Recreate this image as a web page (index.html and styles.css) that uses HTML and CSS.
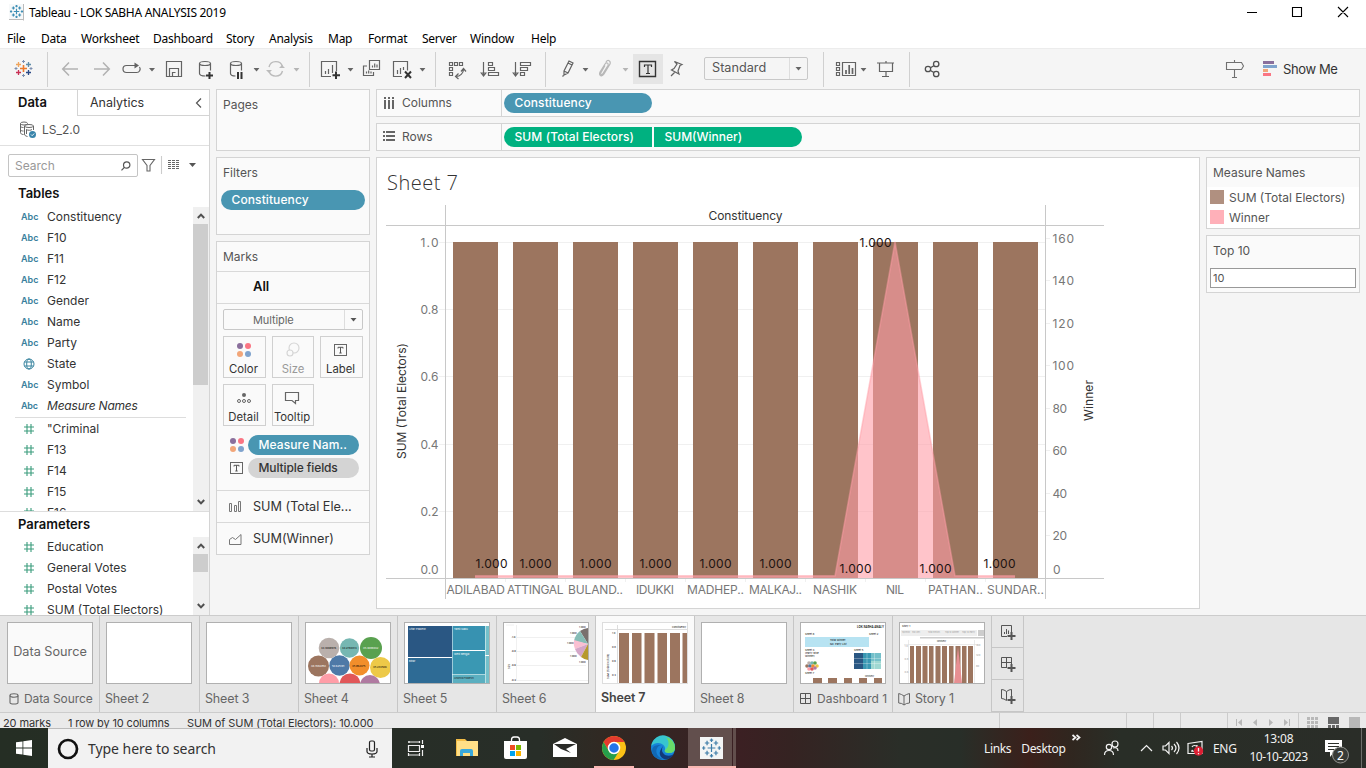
FILE: index.html
```html
<!DOCTYPE html>
<html lang="en">
<head>
<meta charset="utf-8">
<title>Tableau - LOK SABHA ANALYSIS 2019</title>
<link rel="stylesheet" href="styles.css">
</head>
<body>
<svg class="defs" width="0" height="0">
  <defs>
    <symbol id="caret" viewBox="0 0 6 4"><path d="M0 0h6L3 3.6z"/></symbol>
    <symbol id="hash" viewBox="0 0 12 12"><path d="M4 1v10M8 1v10M1 4h10M1 8h10" fill="none" stroke="#3a9c7c" stroke-width="1.1"/></symbol>
    <symbol id="tbox" viewBox="0 0 14 12"><rect x=".5" y=".5" width="12" height="11" fill="none" stroke="#666"/><path d="M4 4.5V3.3h5v1.2M6.5 3.3V9M5.3 9h2.4" fill="none" stroke="#555"/></symbol>
    <symbol id="dots" viewBox="0 0 16 16"><circle cx="4" cy="4" r="3" fill="#8a6f9c"/><circle cx="12" cy="4" r="3" fill="#fa7583"/><circle cx="4" cy="12" r="3" fill="#f2a679"/><circle cx="12" cy="12" r="3" fill="#7fa3cd"/></symbol>
    <symbol id="tlogo" viewBox="0 0 18 18"><path d="M9 5.5v7M5.5 9h7"/><path d="M5 2.5v4M3 4.5h4M13 2.500v4M11 4.500h4M5 11.500v4M3 13.500h4M13 11.500v4M11 13.500h4M9 .500v3M7.500 2h3M9 14.500v3M7.500 16h3M2 7.500v3M.500 9h3M16 7.500v3M14.500 9h3"/></symbol>
    <symbol id="up" viewBox="0 0 8 6"><path d="M.8 5L4 1.600 7.200 5" fill="none" stroke="#505050" stroke-width="2"/></symbol>
    <symbol id="down" viewBox="0 0 8 6"><path d="M.8 1L4 4.400 7.200 1" fill="none" stroke="#505050" stroke-width="2"/></symbol>
  </defs>
</svg>

<header class="titlebar">
  <svg class="app-icon" width="16" height="17" viewBox="0 0 16 17"><path d="M0 0h15v16H0z" fill="#f7f9fa"/><path d="M14.500 0v16.500M0 15.500h15" stroke="#bbb" fill="none"/><use href="#tlogo" x=".5" y=".5" width="14" height="14" fill="none" stroke="#3f8fb5" stroke-width="1.500"/></svg>
  <span class="title">Tableau - LOK SABHA ANALYSIS 2019</span>
  <svg class="window-controls" width="110" height="24" viewBox="1240 0 110 24"><path d="M1247 12.500h10M1292.500 7.500h9v9h-9zM1338 7l10 10M1348 7l-10 10" fill="none" stroke="#000" stroke-width="1.100"/></svg>
</header>
<nav class="menubar"><span class="m1">File</span><span class="m2">Data</span><span class="m3">Worksheet</span><span class="m4">Dashboard</span><span class="m5">Story</span><span class="m6">Analysis</span><span class="m7">Map</span><span class="m8">Format</span><span class="m9">Server</span><span class="m10">Window</span><span>Help</span></nav>

<div class="toolbar">
  <svg width="47" height="35" viewBox="0 52 47 35" fill="none" stroke-width="1.300">
    <path d="M23.500 65v7M20 68.500h7" stroke="#ee7a2c" stroke-width="1.600"/><path d="M18.500 62v5M16 64.500h5" stroke="#efa45c"/><path d="M28.500 62v5M26 64.500h5" stroke="#5d8ca8"/><path d="M18.500 70v5M16 72.500h5" stroke="#c93055"/><path d="M28.500 70v5M26 72.500h5" stroke="#2c4a86"/><path d="M23.500 60v3M22 61.500h3M23.500 74v3M22 75.500h3M31 67v3M29.500 68.500h3M16 67v3M14.500 68.500h3" stroke="#7d8fb0" stroke-width="1"/>
  </svg>
  <i class="sep"></i>
  <svg width="261" height="35" viewBox="48 52 261 35" fill="none" stroke="#636363" stroke-width="1.200">
    <path d="M78 69H63M69 62.500L62.700 69l6.300 6.500M94 69h15M103 62.500l6.300 6.500-6.300 6.500" stroke="#b2b2b2" stroke-width="1.500"/>
    <path d="M135 65.500h-8.500a3.500 3.500 0 0 0 0 7h10a3.500 3.500 0 0 0 3-5.500" /><path d="M134.500 62.500v6l4.500-3z" fill="#636363" stroke="none"/>
    <path d="M166.500 61.500h15v15h-15zM169.500 76.500v-8h9v8M172.500 76.500v-4h3"/>
    <ellipse cx="205" cy="63.500" rx="5.500" ry="2"/><path d="M199.500 63.500v10c0 2 3 2.500 6 2.500M210.500 63.500v7"/><path d="M209.500 72v7M206 75.500h7" stroke="#333" stroke-width="2"/>
    <ellipse cx="236" cy="63.500" rx="5.500" ry="2"/><path d="M230.500 63.500v10c0 2 3 2.500 5 2.500M241.500 63.500v7"/><path d="M238 72v7M241.500 72v7" stroke="#333" stroke-width="2"/>
    <path d="M269 67a7 7 0 0 1 13.500-.5M282.500 71a7 7 0 0 1-13.500 0" stroke="#bbb" stroke-width="1.400"/><path d="M279 68h6l-3-3zM266 70h6l-3 3z" fill="#bbb" stroke="none"/>
    <g fill="#666" stroke="none"><use href="#caret" x="149" y="68" width="6" height="4"/><use href="#caret" x="253.500" y="68" width="6" height="4"/><use href="#caret" x="293.500" y="68" width="6" height="4" fill="#b5b5b5"/></g>
  </svg>
  <i class="sep"></i>
  <svg width="125" height="35" viewBox="310 52 125 35" fill="none" stroke="#636363" stroke-width="1.200">
    <path d="M331 76.500h-9.500v-15h15V71M325.500 74v-3M328.500 74v-5M332.500 73v-8"/><path d="M336 71.500v7.500M332.500 75.300h7.500" stroke="#333" stroke-width="2"/>
    <path d="M369.500 60.500h10v9h-10zM372.500 67.500v-2M374.700 67.500v-4M377 67.500v-3M367 66h-3.500v9.500h10V72M366.500 73.500v-2M368.700 73.500v-3M371 73.500v-2"/>
    <path d="M402 76.500h-8.500v-15h14v9M397.500 74v-4M400.500 74v-6M403.500 70v-3"/><path d="M405 71.500l6 6.500M411 71.500l-6 6.500" stroke="#333" stroke-width="2"/>
    <g fill="#666" stroke="none"><use href="#caret" x="347.500" y="68" width="6" height="4"/><use href="#caret" x="419.500" y="68" width="6" height="4"/></g>
  </svg>
  <i class="sep"></i>
  <svg width="109" height="35" viewBox="436 52 109 35" fill="none" stroke="#636363" stroke-width="1.200">
    <path d="M449.500 62.500h3v3h-3zM454.500 62.500h3v3h-3zM459.500 62.500h3v3h-3zM449.500 67.500h3v3h-3zM449.500 72.500h3v3h-3zM456 76.500c4 0 7.500-3 7.500-7.500M461 71.500l2.500-3 2.500 3M458.500 73.500l-3 3 3 2.500"/>
    <path d="M483.500 62v13M481.200 73l2.300 3 2.300-3zM488.500 62.500h4v3h-4zM488.500 67.500h6v3h-6zM488.500 72.500h10v3h-10z"/>
    <path d="M515.500 62v13M513.200 73l2.300 3 2.300-3zM520.500 62.500h10v3h-10zM520.500 67.500h7v3h-7zM520.500 72.500h4v3h-4z"/>
  </svg>
  <i class="sep"></i>
  <svg width="158" height="35" viewBox="546 52 158 35" fill="none" stroke="#636363" stroke-width="1.200">
    <path d="M564 71l5-10 4 2-5 10-4 2zM564 71l4 2M568 63l4 2M562.500 76.500l1-1"/>
    <path d="M600 72l5-8c1-2 4-1 3 1.500l-5 8c-1 2-3 1-2-1l4-7M600 72c-1.500 4 2 5 4 2l6-10c1-3-2-5-4-2" stroke="#b8b8b8"/>
    <rect x="633" y="54" width="30" height="30" fill="#e5e5e5" stroke="none"/><path d="M639.500 61.500h16v15h-16z" stroke="#333" stroke-width="1.400"/><path d="M644.500 67v-2h7v2M648 65v8.500M646 73.500h4" stroke="#333"/>
    <path d="M674.500 61.500l7.500 3-2 1-2 5.500 1 3-7.500-4 2.500-1.500 3-4.500zM675 72l-4 4"/>
    <g fill="#666" stroke="none"><use href="#caret" x="582.500" y="68" width="6" height="4"/><use href="#caret" x="622.500" y="68" width="6" height="4" fill="#b5b5b5"/></g>
  </svg>
  <div class="fit-select"><span>Standard</span><b><svg width="7" height="4" fill="#666"><use href="#caret" width="7" height="4"/></svg></b></div>
  <i class="sep after-select"></i>
  <svg width="85" height="35" viewBox="824 52 85 35" fill="none" stroke="#636363" stroke-width="1.200">
    <path d="M836.500 62.500h3v3h-3zM836.500 67.500h3v3h-3zM836.500 72.500h3v3h-3zM842.500 62.500h13v13h-13z"/><path d="M846 74v-4M849.200 74v-9M852.500 74v-6" stroke-width="1.700"/>
    <path d="M877 63h17M879.500 63.500v8h13v-8M886 61v2M886 72v4.500M882 76.500h7" /><use href="#caret" x="860.500" y="68" width="6" height="4" fill="#666" stroke="none"/>
  </svg>
  <i class="sep"></i>
  <svg width="32" height="35" viewBox="910 52 32 35" fill="none" stroke="#505050" stroke-width="1.300"><circle cx="928" cy="69" r="2.700"/><circle cx="936.200" cy="64" r="2.700"/><circle cx="936.200" cy="74" r="2.700"/><path d="M930.500 67.700l3.300-2M930.500 70.500l3.300 2"/></svg>
  <div class="show-me">
    <svg width="56" height="35" viewBox="1224 52 56 35" fill="none" stroke="#707070" stroke-width="1.100"><path d="M1226.500 62.500h15l2 3.500-2 3.500h-15zM1234.500 60v2.500M1234.500 69.500v8M1232 77.500h5"/><g stroke="none"><path d="M1263 61h11v3h-11z" fill="#8a6f9c"/><path d="M1263 65h14v3h-14z" fill="#7fa3cd"/><path d="M1263 69h5v3h-5z" fill="#f2a679"/><path d="M1263 73h8v3h-8z" fill="#fa7583"/></g></svg>
    <span>Show Me</span>
  </div>
</div>

<main class="workspace">
  <aside class="data-pane">
    <div class="pane-tabs"><b>Data</b><span><em>Analytics</em><svg width="8" height="10" viewBox="0 0 8 10"><path d="M6 .5L1.500 5 6 9.500" fill="none" stroke="#555" stroke-width="1.200"/></svg></span></div>
    <div class="datasource"><svg width="17" height="17" viewBox="19 121 17 17" fill="none" stroke="#666"><ellipse cx="24" cy="123.500" rx="3.500" ry="1.500"/><path d="M20.500 123.500v9c0 1 1 2 3 2M20.500 126.500c1 1 2 1 3 1M20.500 130c1 1 2 1 3 1"/><ellipse cx="29" cy="126" rx="4.500" ry="1.500"/><path d="M24.500 126v8c0 1.500 1 2 3 2.500M33.500 126v4M26 129.500c2 1 5 1 6 0M26.500 130v4"/><circle cx="32.500" cy="134.500" r="3.500" fill="#3a85ab" stroke="none"/><path d="M31 134.500l1.200 1.200 2-2.200" stroke="#fff" stroke-width=".9"/></svg><span>LS_2.0</span></div>
    <div class="search-row">
      <div class="search"><span>Search</span><svg width="10" height="10" viewBox="0 0 10 10" fill="none" stroke="#555" stroke-width="1.200"><circle cx="5.700" cy="4" r="3.200"/><path d="M3.400 6.300L.5 9.300"/></svg></div>
      <svg width="68" height="22" viewBox="138 154 68 22" fill="none" stroke="#666" stroke-width="1.100"><path d="M142.500 159.500h12l-4.500 6v5.500h-3v-5.500z"/><path d="M161.500 156v18" stroke="#ccc"/><path d="M168 160.500h12M168 162.500h12M168 164.500h12M168 166.500h12M168 168.500h12" stroke-dasharray="3 1"/><path d="M189 163h7l-3.500 4z" fill="#555" stroke="none"/></svg>
    </div>
    <h3 class="tables">Tables</h3>
    <div class="field-area tall">
      <ul>
        <li><i>Abc</i>Constituency</li><li><i>Abc</i>F10</li><li><i>Abc</i>F11</li><li><i>Abc</i>F12</li><li><i>Abc</i>Gender</li><li><i>Abc</i>Name</li><li><i>Abc</i>Party</li>
        <li><i><svg width="12" height="12" viewBox="0 0 12 12" fill="none" stroke="#3a85a0"><circle cx="6" cy="6" r="5"/><ellipse cx="6" cy="6" rx="2.300" ry="5"/><path d="M1.500 4h9M1.500 8h9"/></svg></i>State</li>
        <li><i>Abc</i>Symbol</li><li class="italic"><i>Abc</i>Measure Names</li><li class="rule"></li>
        <li><i><svg width="12" height="12"><use href="#hash"/></svg></i>"Criminal</li><li><i><svg width="12" height="12"><use href="#hash"/></svg></i>F13</li><li><i><svg width="12" height="12"><use href="#hash"/></svg></i>F14</li><li><i><svg width="12" height="12"><use href="#hash"/></svg></i>F15</li><li><i><svg width="12" height="12"><use href="#hash"/></svg></i>F16</li>
      </ul>
      <div class="scroll"><svg width="8" height="6"><use href="#up"/></svg><div class="thumb"></div><svg width="8" height="6"><use href="#down"/></svg></div>
    </div>
    <h3 class="params">Parameters</h3>
    <div class="field-area short">
      <ul><li><i><svg width="12" height="12"><use href="#hash"/></svg></i>Education</li><li><i><svg width="12" height="12"><use href="#hash"/></svg></i>General Votes</li><li><i><svg width="12" height="12"><use href="#hash"/></svg></i>Postal Votes</li><li><i><svg width="12" height="12"><use href="#hash"/></svg></i>SUM (Total Electors)</li></ul>
      <div class="scroll"><svg width="8" height="6"><use href="#up"/></svg><div class="thumb"></div><svg width="8" height="6"><use href="#down"/></svg></div>
    </div>
  </aside>

  <section class="cards">
    <div class="card pages">Pages</div>
    <div class="card filters">Filters<div class="pill blue">Constituency</div></div>
    <div class="card marks">
      <div class="marks-title">Marks</div>
      <div class="marks-all">All</div>
      <div class="mark-type"><span>Multiple</span><b><svg width="7" height="4" fill="#555"><use href="#caret" width="7" height="4"/></svg></b></div>
      <div class="mark-buttons">
        <div><svg width="16" height="16"><use href="#dots"/></svg>Color</div>
        <div class="off"><svg width="16" height="16" fill="none" stroke="#d5d5d5" stroke-width="1.100"><circle cx="9" cy="6" r="5"/><circle cx="5" cy="11" r="3" fill="#fafafa"/></svg>Size</div>
        <div><svg width="14" height="16" viewBox="0 -1 14 14"><use href="#tbox" width="14" height="12"/></svg>Label</div>
        <div><svg width="16" height="16" fill="none" stroke="#666"><circle cx="8" cy="5" r="2" fill="#666" stroke="none"/><circle cx="3" cy="11" r="1.500"/><circle cx="8" cy="11" r="1.500"/><circle cx="13" cy="11" r="1.500"/></svg>Detail</div>
        <div><svg width="16" height="16" fill="none" stroke="#666" stroke-width="1.200"><path d="M1.500 2.500h13v8h-3v3l-3.500-3H1.500z"/></svg>Tooltip</div>
      </div>
      <div class="encoding"><svg width="16" height="16"><use href="#dots"/></svg><div class="pill blue">Measure Nam..</div></div>
      <div class="encoding"><svg width="16" height="12"><use href="#tbox" x="1" width="14" height="12"/></svg><div class="pill grey">Multiple fields</div></div>
      <div class="mark-sub first"><svg width="14" height="12" fill="none" stroke="#777"><path d="M.500 2.500h2v8h-2zM5.500 4.500h2v6h-2zM9.500.5h2v10h-2z"/></svg>SUM (Total Ele...</div>
      <div class="mark-sub"><svg width="14" height="12" fill="none" stroke="#777"><path d="M.500 11.500v-5l3-2 3 2 5.500-5v10z"/></svg>SUM(Winner)</div>
    </div>
  </section>

  <section class="view-area">
    <div class="shelf"><div class="shelf-name"><svg width="12" height="12" fill="#666"><path d="M1 0h2v2H1zM5 0h2v2H5zM9 0h2v2H9zM1 3h2v9H1zM5 3h2v9H5zM9 3h2v9H9z"/></svg>Columns</div><div class="pill blue">Constituency</div></div>
    <div class="shelf"><div class="shelf-name"><svg width="12" height="12" fill="#666"><path d="M0 0h2v2H0zM0 4h2v2H0zM0 8h2v2H0zM3 0h9v2H3zM3 4h9v2H3zM3 8h9v2H3z"/></svg>Rows</div><div class="pill green left-half">SUM (Total Electors)</div><div class="pill green right-half">SUM(Winner)</div></div>
    <div class="view-row">
      <div class="sheet">
        <svg class="chart" width="822" height="450" viewBox="377 158 822 450">
          <text class="sheet-title" x="387" y="190" textLength="71">Sheet 7</text>
          <path class="grid" d="M439 242.500h606M439 309.500h606M439 376.500h606M439 444.500h606M439 511.500h606M1046 238.500h4M1046 280.500h4M1046 323.500h4M1046 365.500h4M1046 408.500h4M1046 450.500h4M1046 493.500h4M1046 535.500h4M505.500 579v3M565.500 579v3M625.500 579v3M685.500 579v3M745.500 579v3M805.500 579v3M865.500 579v3M925.500 579v3M985.500 579v3"/>
          <path fill="#9c755f" d="M453 242h45v336h-45zM513 242h45v336h-45zM573 242h45v336h-45zM633 242h45v336h-45zM693 242h45v336h-45zM753 242h45v336h-45zM813 242h45v336h-45zM873 242h45v336h-45zM933 242h45v336h-45zM993 242h45v336h-45z"/>
          <path class="area" d="M475 575.500H835L895 242l60 333.500h60V578H475z"/>
          <path class="area-line" d="M475 576H835L895 242l60 334h60"/>
          <path class="axis" d="M445.500 205v394M1045.500 205v394M386 225.500h718M386 578.500h718"/>
          <text class="head" x="708.500" y="220" textLength="74">Constituency</text>
          <g class="ticks">
            <text x="420.500" y="247" textLength="18">1.0</text><text x="420.500" y="314" textLength="18">0.8</text><text x="420.500" y="381" textLength="18">0.6</text><text x="420.500" y="449" textLength="18">0.4</text><text x="420.500" y="516" textLength="18">0.2</text><text x="420.500" y="574" textLength="18">0.0</text>
            <text x="1052.500" y="243" textLength="21.500">160</text><text x="1052.500" y="285" textLength="21.500">140</text><text x="1052.500" y="328" textLength="21.500">120</text><text x="1052.500" y="370" textLength="21.500">100</text><text x="1052.500" y="413" textLength="14.500">80</text><text x="1052.500" y="455" textLength="14.500">60</text><text x="1052.500" y="498" textLength="14.500">40</text><text x="1052.500" y="540" textLength="14.500">20</text><text x="1053" y="574">0</text>
            <text x="446.500" y="594" textLength="58.500">ADILABAD</text><text x="507" y="594" textLength="56.500">ATTINGAL</text><text x="568" y="594" textLength="55">BULAND..</text><text x="636" y="594" textLength="38">IDUKKI</text><text x="687" y="594" textLength="57">MADHEP..</text><text x="749" y="594" textLength="53">MALKAJ..</text><text x="813" y="594" textLength="44">NASHIK</text><text x="886" y="594" textLength="18">NIL</text><text x="928" y="594" textLength="55">PATHAN..</text><text x="987" y="594" textLength="57">SUNDAR..</text>
          </g>
          <g class="labels">
            <text x="475.500" y="568" textLength="32">1.000</text><text x="519.500" y="568" textLength="32">1.000</text><text x="579.500" y="568" textLength="32">1.000</text><text x="639.500" y="568" textLength="32">1.000</text><text x="699.500" y="568" textLength="32">1.000</text><text x="759.500" y="568" textLength="32">1.000</text><text x="839.500" y="573" textLength="32">1.000</text><text x="859.500" y="247" textLength="32">1.000</text><text x="919.500" y="573" textLength="32">1.000</text><text x="983.500" y="568" textLength="32">1.000</text>
          </g>
          <text class="head" transform="translate(406 459) rotate(-90)" textLength="116">SUM (Total Electors)</text>
          <text class="head" transform="translate(1093 421) rotate(-90)" textLength="41">Winner</text>
        </svg>
      </div>
      <div class="side">
        <div class="card legend"><div class="side-title">Measure Names</div><div class="key"><i class="brown"></i>SUM (Total Electors)</div><div class="key"><i class="pink"></i>Winner</div></div>
        <div class="card param"><div class="side-title">Top 10</div><div class="input">10</div></div>
      </div>
    </div>
  </section>
</main>

<div class="sheet-tabs">
  <div class="tab wide first"><div class="preview ds">Data Source</div><div class="label"><svg width="10" height="12" viewBox="0 0 10 12" fill="none" stroke="#666" stroke-width="1.100"><ellipse cx="5" cy="2.500" rx="4" ry="1.700"/><path d="M1 2.500v7c0 2 8 2 8 0v-7"/></svg>Data Source</div></div>
  <div class="tab wide"><div class="preview"></div><div class="label">Sheet 2</div></div>
  <div class="tab"><div class="preview"></div><div class="label">Sheet 3</div></div>
  <div class="tab"><div class="preview"><svg width="84" height="60" viewBox="306 623 84 60">
    <g><circle cx="329" cy="648" r="10.300" fill="#bab0ac"/><circle cx="349.500" cy="648" r="9.700" fill="#76b7b2"/><circle cx="371" cy="648" r="11" fill="#59a14f"/><circle cx="318.500" cy="666" r="10.500" fill="#9c755f"/><circle cx="339.500" cy="665.500" r="10.200" fill="#4e79a7"/><circle cx="359.500" cy="665.500" r="10" fill="#f28e2b"/><circle cx="380.500" cy="667.500" r="10.500" fill="#edc948"/><circle cx="329" cy="683.500" r="10" fill="#ff9da7"/><circle cx="350" cy="684" r="10.500" fill="#e15759"/><circle cx="370" cy="685" r="10" fill="#b07aa1"/></g>
    <g class="tiny"><text x="321" y="649">44.3069676</text><text x="342" y="649">44.2780314</text><text x="363" y="649" fill="#fff">45.4088042</text><text x="311" y="667" fill="#fff">46.7082953</text><text x="332" y="667" fill="#fff">50.625191</text><text x="352" y="667">45.962475</text><text x="373" y="668">45.234506</text></g></svg></div><div class="label">Sheet 4</div></div>
  <div class="tab"><div class="preview"><svg width="84" height="60" viewBox="405 623 84 60">
    <path fill="#2a5783" d="M408 626h44v31h-44z"/><path fill="#2e6b95" d="M408 658h44v25h-44z"/><path fill="#3792b1" d="M452.500 626h32.500v24h-32.500z"/><path fill="#3a98b3" d="M452.500 651h32.500v23h-32.500z"/><path fill="#5bafc0" d="M452.500 674.500h32.500v8.500h-32.500z"/><path fill="#74c0ca" d="M485.500 626h3.500v57h-3.500z"/><path d="M485 655.500h4" stroke="#fff"/>
    <g class="tiny" fill="#fff"><text x="409" y="630">Uttar Pradesh</text><text x="454" y="630">Tamil Nadu</text><text x="409" y="662">Bihar</text><text x="454" y="655">West Bengal</text><text x="454" y="679" fill="#222">Andhra Pradesh</text></g></svg></div><div class="label">Sheet 5</div></div>
  <div class="tab"><div class="preview"><svg width="84" height="60" viewBox="504 623 84 60">
    <path d="M506 625h8M516.500 625v56M511 637.500h73M511 651.500h76M511 665.500h75M511 680.500h77" stroke="#f0f0f0" fill="none"/>
    <g><path fill="#79706e" d="M588 644V628a16 16 0 0 0-8 3z"/><path fill="#86bcb6" d="M588 644l-8-13a16 16 0 0 0-6 10z"/><path fill="#fabfd2" d="M588 644l-14-4a16 16 0 0 0 1 9z"/><path fill="#d4a6c8" d="M588 644l-13 5a16 16 0 0 0 6 8z"/><path fill="#b6992d" d="M588 644l-7 13a16 16 0 0 0 7 3z"/></g>
    <g class="tiny"><text x="579" y="628">1.000</text><text x="570" y="634">1.000</text><text x="567" y="644">1.000</text><text x="570" y="657">1.000</text><text x="579" y="663">1.000</text><text x="512" y="638">1.0</text><text x="512" y="652">0.8</text><text x="512" y="666">0.6</text><text x="512" y="681">0.4</text><text transform="translate(510 669) rotate(-90)">Size</text></g></svg></div><div class="label">Sheet 6</div></div>
  <div class="tab active"><div class="preview"><svg width="84" height="60" viewBox="603 623 84 60">
    <path d="M605 629.500h82M617.500 625v58" stroke="#ddd"/><path fill="#9c755f" d="M619 633h10v50h-10zM632 633h9.500v50H632zM644.500 633h10v50h-10zM657.500 633h9.500v50h-9.500zM670 633h10v50h-10zM682.500 633h5v50h-5z"/>
    <g class="tiny"><text x="672" y="628" textLength="14" lengthAdjust="spacingAndGlyphs">Constituency</text><text x="612" y="634">1.0</text><text x="612" y="648">0.8</text><text x="612" y="662">0.6</text><text x="612" y="676">0.4</text><text transform="translate(609 679) rotate(-90)">SUM (Total Electors)</text></g></svg></div><div class="label">Sheet 7</div></div>
  <div class="tab"><div class="preview"></div><div class="label">Sheet 8</div></div>
  <div class="tab"><div class="preview"><svg width="84" height="60" viewBox="801 623 84 60">
    <path fill="#b7e3f2" d="M805 637h64v10h-64z"/>
    <path fill="#2a5783" d="M854 653h9v16h-9z"/><path fill="#3a98b3" d="M863 653h8v16h-8z"/><path fill="#74c0ca" d="M871 653h10v8h-10z"/><path fill="#9fd8d2" d="M871 661h10v8h-10z"/><path d="M854 658.500h27M854 663.500h27M867 653v16M874.500 653v16" stroke="#fff" stroke-width=".3"/>
    <circle cx="809" cy="663" r="1.800" fill="#bab0ac"/><circle cx="812" cy="663" r="1.800" fill="#76b7b2"/><circle cx="815" cy="663" r="1.800" fill="#59a14f"/><circle cx="807" cy="666" r="1.800" fill="#9c755f"/><circle cx="810" cy="666" r="1.800" fill="#4e79a7"/><circle cx="813" cy="666" r="1.800" fill="#f28e2b"/><circle cx="817" cy="666" r="1.800" fill="#edc948"/><circle cx="809" cy="669" r="1.800" fill="#ff9da7"/><circle cx="812" cy="669" r="1.800" fill="#e15759"/><circle cx="815" cy="668" r="1.800" fill="#b07aa1"/>
    <path fill="#9c755f" d="M813 678h9v5h-9zM828 678h9v5h-9zM844 678h8v5h-8zM859 678h8v5h-8zM874 678h8v5h-8z"/>
    <g class="tiny"><text class="dash-title" x="857" y="628" textLength="27" lengthAdjust="spacingAndGlyphs">LOK SABHA ANALY</text><text x="805" y="635">Sheet 8</text><text x="869" y="635">Sheet 2</text><text x="830" y="641">Total Winner</text><text x="830" y="645">No. Party List</text><text x="805" y="651">Sheet 4</text><text x="805" y="654">(Party wise</text><text x="805" y="657">Winner)</text><text x="854" y="651">Sheet 5</text><text x="805" y="674">Sheet 7</text><text x="865" y="677" textLength="9" lengthAdjust="spacingAndGlyphs">Constituency</text></g></svg></div><div class="label dash"><svg width="12" height="12" fill="none" stroke="#555"><path d="M.500 .500h10v10H.500zM5.500 .500v10M.500 5.500h10"/></svg>Dashboard 1</div></div>
  <div class="tab"><div class="preview"><svg width="84" height="60" viewBox="900 623 84 60">
    <path fill="#eee" d="M901 630h76v6h-76z"/><path fill="#ccc" d="M978 630h7v6h-7zM920 637h65v1.500h-65z"/><path d="M908.500 640v43M904 644.500h72M974.500 640v43" stroke="#ddd" stroke-width=".6"/>
    <path fill="#9c755f" d="M910 646h4v37h-4zM916 646h5v37h-5zM922.500 646h5v37h-5zM929 646h4.500v37H929zM935.500 646h5v37h-5zM942 646h5v37h-5zM949 646h4.500v37H949zM955.500 646h5v37h-5zM962 646h4.500v37H962zM968 646h5v37h-5z"/><path fill="#e78f92" d="M954 683l4-36 4 36z"/>
    <g class="tiny"><text x="902" y="627">Story 1</text><g fill="#999"><text x="902" y="633" textLength="8" lengthAdjust="spacingAndGlyphs">Top Elector</text><text x="912" y="633" textLength="8" lengthAdjust="spacingAndGlyphs">Total Votes</text><text x="928" y="633" textLength="12" lengthAdjust="spacingAndGlyphs">Total Electors</text><text x="945" y="633" textLength="14" lengthAdjust="spacingAndGlyphs">Top 10 Winner</text><text x="962" y="633" textLength="13" lengthAdjust="spacingAndGlyphs">Top 10 Party</text></g><text x="937" y="642" textLength="9" lengthAdjust="spacingAndGlyphs">Constituency</text><g fill="#999"><text x="904.500" y="647">1.0</text><text x="904.500" y="660">0.8</text><text x="904.500" y="673">0.6</text><text x="976" y="646">160</text><text x="976" y="656">120</text><text x="976" y="667">80</text></g></g></svg></div><div class="label"><svg width="12" height="13" fill="none" stroke="#666"><path d="M6 3L3.500 1.500 .700.500v9.500l3 .5L6 12l2.500-1.500 3-.5V.5l-3 1zM6 3v9"/></svg>Story 1</div></div>
  <div class="new-tabs">
    <div><svg width="16" height="16" fill="none" stroke="#555"><path d="M7 12.500H1.500v-11h10V8M4.500 10V8M6.500 10V5M8.500 10V6.500"/><path d="M11.500 8v8M7.500 12h8" stroke-width="2"/></svg></div>
    <div><svg width="16" height="16" fill="none" stroke="#555"><path d="M7 11.500H1.500v-10h10V8M6.500 1.500v10M1.500 6.500h10"/><path d="M11.500 8v8M7.500 12h8" stroke-width="2"/></svg></div>
    <div><svg width="16" height="16" fill="none" stroke="#555"><path d="M6.500 3.500L4 2 1.500 1.500v9L4 11l2.500 1.500v-9L9 2l2.500-.5V8"/><path d="M11.500 8v8M7.500 12h8" stroke-width="2"/></svg></div>
  </div>
</div>
<div class="status"><span class="s1">20 marks</span><span class="s2">1 row by 10 columns</span><span class="s3">SUM of SUM (Total Electors): 10.000</span>
  <svg width="370" height="15" viewBox="996 713 370 15"><path d="M999.500 713v15M1126.500 713v15M1153.500 713v15M1180.500 713v15M1227.500 713v15M1298.500 713v15" stroke="#ccc"/><g fill="#b8b8b8"><path d="M1236 719h1v7h-1zM1242 719v7l-4-3.500zM1257 719v7l-4-3.500zM1269 719v7l4-3.500zM1284 719v7l4-3.500zM1289 719h1v7h-1zM1307 717h3v3h-3zM1311 717h3v3h-3zM1315 717h3v3h-3zM1307 721h3v3h-3zM1311 721h3v3h-3zM1315 721h3v3h-3zM1307 725h3v3h-3zM1311 725h3v3h-3zM1315 725h3v3h-3zM1349 717h11v11h-11z"/></g><path fill="#666" d="M1328 717h11v7h-11zM1328 725h3v3h-3zM1332 725h3v3h-3zM1336 725h3v3h-3z"/></svg>
</div>

<footer class="taskbar">
  <div class="start"><svg width="16" height="16" fill="#fff"><path d="M0 2.300L6.500 1.400v6.200H0zM7.300 1.300L16 0v7.600H7.300zM0 8.400h6.500v6.200L0 13.700zM7.300 8.400H16V16l-8.700-1.300z"/></svg></div>
  <div class="win-search"><svg width="22" height="22" fill="none" stroke="#111" stroke-width="2.700"><circle cx="11" cy="11" r="9"/></svg><span>Type here to search</span><svg class="mic" width="12" height="18" fill="none" stroke="#222" stroke-width="1.200"><rect x="3.500" y="1" width="5" height="10" rx="1.500"/><path d="M1 8v3.500c0 2 2 2.500 5 2.500s5-.5 5-2.500V8M6 14v3M3 17h6"/></svg></div>
  <svg class="apps" width="344" height="40" viewBox="392 728 344 40">
    <g fill="none" stroke="#eee" stroke-width="1.200"><path d="M408 742h12M409 741v2M419.500 741v2M408.500 745.500h11v6h-11zM408 755h12M408.500 753v3M419.500 753v3M422.500 740v4M422.500 750v6"/></g><path d="M421 745h3v3h-3z" fill="#fff"/>
    <path d="M456 739h9l2 2h11v15h-22z" fill="#f3bd47"/><path d="M457 741h21v15h-21z" fill="#ffdf87"/><path d="M460 756v-5q0-2 2-2h9q2 0 2 2v5h-3v-3h-7v3z" fill="#38a8dc"/>
    <path d="M504 741h23v16q0 2-2 2h-19q-2 0-2-2z" fill="#fff"/><path d="M511.500 742v-2q0-3 2.500-3h3q2.500 0 2.500 3v2" fill="none" stroke="#fff" stroke-width="1.300"/><path fill="#f04e24" d="M510 745h5v5h-5z"/><path fill="#7eb900" d="M516 745h5v5h-5z"/><path fill="#00a2ed" d="M510 751h5v5h-5z"/><path fill="#fbb400" d="M516 751h5v5h-5z"/>
    <path d="M553 744l12-6 12 6v13h-24z" fill="#fff"/><path d="M554 744h22l-10 5 5 4-10-4z" fill="#2b2c29"/>
    <g><circle cx="614" cy="748" r="12" fill="#fbc116"/><path d="M603.600 742a12 12 0 0 1 20.800 0H614a6 6 0 0 0-5.200 9z" fill="#e33b2e"/><path d="M603.600 742a12 12 0 0 0 10 18l5.600-9a6 6 0 0 1-10.400 0z" fill="#269e4b"/><circle cx="614" cy="748" r="5.500" fill="#2575e8" stroke="#fff" stroke-width="1.500"/></g>
    <g><circle cx="663" cy="748" r="12" fill="#1683d8"/><path d="M651.500 744a12 12 0 0 1 23.500 4q0 5-6 5c-3 0-5-1-4-3 1-4-3-7-7-7q-4 0-6.500 3z" fill="#37c5cf"/><path d="M666 737q9 3 9 11 0 5-6 5c-3 0-5-1-4-3 4-3 5-8 1-13z" fill="#68dc69"/><path d="M661 745c-7 2-6 12 2 14q-10 1-11-8 0-7 9-6z" fill="#1168b4"/><path d="M663 746q-3 5 2 9 5 2 9-1-3 6-10 5-8-4-1-13z" fill="#123a7a"/></g>
    <path d="M688 728h44v40h-44z" fill="#624f4d"/><path d="M733 728h3v40h-3z" fill="#624f4d"/><path d="M700 737h23v22h-23z" fill="#f3f5f5"/><use href="#tlogo" x="701.500" y="738" width="20" height="20" fill="none" stroke="#3e7da8" stroke-width="1.100"/>
    <path d="M594 766h40v2h-40zM688 766h48v2h-48z" fill="#f9b7b2"/>
  </svg>
  <div class="links"><span>Links</span><span class="desktop">Desktop</span></div>
  <svg width="137" height="40" viewBox="1070 728 137 40" fill="none" stroke="#f2f2f2" stroke-width="1.200"><path d="M1072.500 735l3 2.500-3 2.500M1076.500 735l3 2.500-3 2.500" stroke-width="1.700"/><circle cx="1109" cy="747" r="2.700"/><path d="M1104.500 755c0-6 9-6 9 0"/><circle cx="1115" cy="744" r="3"/><path d="M1113 748c3-1 5 0 5 3"/><path d="M1141 751l5.500-5.500 5.500 5.500"/><path d="M1163 746h2.500l3.500-3.500v11l-3.500-3.500h-2.500zM1171.500 746q2 2 0 4M1174 744q4 4 0 8M1176.500 742q5 6 0 12"/><path d="M1188 743.500l14-2v12h-14zM1192 747c1-2 4-2 5 0v-2M1197 750c-1 2-4 2-5 0v2"/><circle cx="1198.500" cy="751" r="4.700" fill="#dd2034" stroke="none"/><path d="M1198.500 748v3.500M1198.500 753v1.200" stroke-width="1.300"/></svg>
  <span class="lang">ENG</span>
  <div class="clock"><span class="time">13:08</span><span>10-10-2023</span></div>
  <svg class="action" width="46" height="40" viewBox="1320 728 46 40"><path d="M1325 740h17v12h-8l-4 5v-5h-5z" fill="#fff"/><path d="M1328 743.500h11M1328 746.500h11M1328 749.500h6" stroke="#2d302b"/><circle cx="1340.500" cy="755" r="8" fill="#383b37" stroke="#92938f"/><text x="1337" y="759.500" fill="#fff" font-size="12">2</text><path d="M1361.500 728v40" stroke="#6c6e6a"/></svg>
</footer>
</body>
</html>
```
FILE: styles.css
```css
* { box-sizing: border-box; }
html, body { margin: 0; padding: 0; }
body { width: 1366px; height: 768px; overflow: hidden; display: flex; flex-direction: column; background: #f5f5f5; color: #333; font: 12px/16px Inter, "Liberation Sans", sans-serif; }
svg { display: block; flex: none; }
.defs { position: absolute; }
i, em { font-style: normal; }
span { white-space: nowrap; }

.titlebar { height: 26px; background: #fff; display: flex; padding-left: 9px; align-items: center; font: 12px/16px "Noto Sans", sans-serif; color: #000; }
.app-icon { margin-top: -2px; }
.title { margin-left: 4px; letter-spacing: -.3px; }
.window-controls { margin-left: auto; margin-right: 16px; margin-top: -2px; }
.menubar { height: 22px; background: #fff; display: flex; padding: 4px 0 0 7px; font: 12px/17px "Noto Sans", sans-serif; letter-spacing: -.25px; color: #000; }
.m1 { width: 34px; } .m2 { width: 40px; } .m3 { width: 72px; } .m4 { width: 73px; } .m5 { width: 43px; } .m6 { width: 59px; } .m7 { width: 40px; } .m8 { width: 54px; } .m9 { width: 48px; } .m10 { width: 61px; }

.toolbar { height: 41px; border-top: 1px solid #ececec; display: flex; align-items: flex-start; padding-top: 3px; }
.sep { width: 1px; height: 35px; background: #d0d0d0; flex: none; }
.fit-select { width: 104px; height: 23px; margin-top: 5px; border: 1px solid #c8c8c8; border-radius: 2px; display: flex; align-items: center; font-size: 12.700px; color: #555; padding-left: 7px; }
.fit-select span { margin-top: -1px; }
.fit-select b { margin-left: auto; width: 18px; height: 21px; border-left: 1px solid #ddd; display: grid; place-items: center; }
.after-select { margin-left: 15px; }
.show-me { margin-left: auto; width: 142px; display: flex; align-items: center; font-size: 13px; letter-spacing: -.4px; gap: 3px; color: #333; }
.show-me span { margin-top: -2px; }

.workspace { height: 526px; display: flex; }
.data-pane { width: 210px; border: 1px solid #d4d4d4; border-width: 1px 1px 0 0; background: #fff; }
.pane-tabs { height: 26px; display: flex; line-height: 25px; }
.pane-tabs b { width: 77px; padding-left: 18px; font-weight: 600; font-size: 13px; color: #111; }
.pane-tabs span { flex: 1; border-left: 1px solid #d4d4d4; border-bottom: 1px solid #d4d4d4; display: flex; justify-content: space-between; align-items: center; padding: 0 6px 0 12px; font-size: 12.500px; }
.datasource { height: 30px; border-bottom: 1px solid #e0e0e0; display: flex; align-items: center; gap: 6px; padding: 0 0 2px 19px; color: #555; }
.search-row { height: 31px; padding: 8px 0 0 8px; display: flex; }
.search { width: 130px; height: 23px; border: 1px solid #c4c4c4; border-radius: 2px; display: flex; align-items: center; justify-content: space-between; padding: 0 6px 0 6px; color: #999; }
h3 { margin: 0; font-size: 13px; font-weight: 600; color: #111; padding-left: 18px; }
.tables { height: 29px; line-height: 32px; }
.field-area { display: flex; overflow: hidden; }
.tall { height: 305px; } .short { height: 79px; }
.field-area ul { list-style: none; margin: 0; padding: 0 0 0 15px; width: 193px; flex: none; }
.field-area li { height: 21px; line-height: 20px; display: flex; align-items: center; }
.field-area li i { width: 32px; padding-left: 6px; font-size: 9px; font-weight: 600; color: #3a7f9d; flex: none; }
.field-area li i svg { margin-left: 2px; }
.field-area .italic { font-style: italic; letter-spacing: -.2px; }
.field-area .rule { height: 1px; background: #ddd; margin: 1px 7px 0 0; }
.scroll { width: 16px; background: #f0f0f0; display: flex; flex-direction: column; align-items: center; padding: 6px 1px 6px 0; margin-top: 1px; }
.scroll .thumb { width: 15px; background: #cdcdcd; margin: 5px 0 auto; flex: none; }
.tall .thumb { height: 161px; } .short .thumb { height: 18px; }
.params { height: 25px; line-height: 24px; border-top: 1px solid #ddd; }

.cards { width: 154px; margin-left: 6px; display: flex; flex-direction: column; gap: 6px; }
.card { border: 1px solid #d4d4d4; background: #fafafa; }
.pages { padding: 7px 6px 0; color: #555; height: 62px; }
.filters { height: 78px; padding: 7px 4px 0 6px; color: #555; }
.pill { height: 20px; border-radius: 10px; line-height: 20px; padding-left: 10.500px; font-weight: 500; letter-spacing: .1px; color: #fff; white-space: nowrap; }
.filters .pill { margin: 9px 0 0 -2px; }
.blue { background: #4996b2; } .green { background: #00b180; } .grey { background: #d4d4d4; color: #333; letter-spacing: -.1px; }
.marks { height: 314px; }
.marks-title { height: 30px; line-height: 30px; padding-left: 6px; border-bottom: 1px solid #d9d9d9; color: #555; }
.marks-all { height: 32px; line-height: 29px; padding-left: 36px; border-bottom: 1px solid #d9d9d9; font-weight: 600; font-size: 13px; color: #111; }
.mark-type { margin: 5px 6px 0; height: 21px; border: 1px solid #c8c8c8; border-radius: 2px; display: flex; align-items: center; font-size: 11px; letter-spacing: -.1px; color: #666; padding-left: 29px; }
.mark-type b { margin-left: auto; width: 18px; height: 19px; border-left: 1px solid #ddd; display: grid; place-items: center; }
.mark-buttons { display: grid; grid-template-columns: 43px 42px 43px; column-gap: 6px; row-gap: 6px; padding: 6px 6px 0; }
.mark-buttons div { height: 42px; border: 1px solid #d0d0d0; display: flex; flex-direction: column; align-items: center; padding: 5px 2px 0 0; gap: 3px; font-size: 11.300px; white-space: nowrap; }
.mark-buttons .off { color: #999; padding-right: 0; }
.encoding { display: flex; align-items: center; height: 20px; margin: 9px 10px 0 12px; gap: 3px; }
.encoding .pill { flex: 1; }
.encoding + .encoding { margin-top: 3px; }
.mark-sub { height: 32px; border-top: 1px solid #d9d9d9; display: flex; align-items: center; padding-left: 12px; gap: 10px; font-size: 12.700px; letter-spacing: -.02px; white-space: nowrap; }
.first.mark-sub { margin-top: 12px; }

.view-area { margin-left: 6px; width: 984px; }
.shelf { height: 28px; border: 1px solid #d4d4d4; background: #fafafa; display: flex; align-items: center; margin-bottom: 6px; }
.shelf-name { width: 125px; height: 26px; border-right: 1px solid #d4d4d4; display: flex; align-items: center; padding-left: 6px; gap: 7px; color: #555; margin-right: 2px; }
.shelf .pill { width: 148px; }
.left-half { border-radius: 10px 0 0 10px; }
.right-half { border-radius: 0 10px 10px 0; margin-left: 2px; letter-spacing: 0; }
.view-row { display: flex; gap: 6px; align-items: flex-start; }
.sheet { width: 824px; height: 452px; background: #fff; border: 1px solid #d4d4d4; }
.chart text { font: 12px Inter, sans-serif; }
.chart .sheet-title { font: 300 20px "Open Sans", sans-serif; fill: #333; }
.chart .head { fill: #333; }
.chart .ticks text { fill: #777; }
.chart .labels text { fill: #1c1310; }
.grid { stroke: #f0f0f0; fill: none; }
.axis { stroke: #c8c8c8; fill: none; }
.area { fill: #ff9da7; fill-opacity: .6; }
.area-line { fill: none; stroke: #ff9da7; stroke-opacity: .45; stroke-width: 1.600; }
.side { width: 154px; display: flex; flex-direction: column; gap: 6px; color: #555; }
.side-title { height: 29px; line-height: 30px; padding-left: 6px; background: #fafafa; }
.legend { height: 72px; background: #fff; }
.key { height: 20px; display: flex; align-items: center; gap: 5px; padding: 1px 0 0 3px; white-space: nowrap; }
.key i { width: 14px; height: 14px; margin-top: -1px; }
.brown { background: #b09080; } .pink { background: #ffb0b9; }
.param { height: 58px; }
.input { margin: 3px; width: 146px; height: 20px; border: 1px solid #999; background: #fff; font-size: 11px; line-height: 19px; padding-left: 2px; }

.sheet-tabs { height: 97px; border-top: 1px solid #ccc; background: #e6e6e6; display: flex; }
.tab { width: 99px; border-right: 1px solid #c6c6c6; padding: 6px 0 0 6px; }
.tab.wide { width: 100px; }
.tab.first { padding-left: 7px; }
.preview { width: 86px; height: 62px; border: 1px solid #b0b0b0; background: #fff; overflow: hidden; }
.ds { background: #fafafa; display: grid; place-items: center; font-size: 12.700px; padding-bottom: 2px; color: #666; white-space: nowrap; }
.label { height: 28px; display: flex; align-items: center; gap: 5px; padding-top: 2px; font-size: 12.500px; letter-spacing: -.15px; color: #666; white-space: nowrap; margin-left: -1px; }
.first .label { padding-left: 3px; font-size: 12px; letter-spacing: -.1px; }
.label.dash { font-size: 12px; letter-spacing: 0; padding-left: 1px; }
.active { background: #fafafa; }
.active .preview { border-color: #ddd; }
.active .label { font-weight: 600; padding-top: 0; height: 27px; color: #444; }
.tiny text { font: 2.600px Inter, sans-serif; }
.tiny .dash-title { font-size: 3.500px; font-weight: 600; }
.new-tabs { width: 32px; border-right: 1px solid #c6c6c6; }
.new-tabs div { height: 32px; border-bottom: 1px solid #c6c6c6; padding: 8px 0 0 8px; }
.status { height: 16px; border-top: 1px solid #ccc; background: #eaeaea; display: flex; overflow: hidden; font-size: 11px; letter-spacing: -.1px; line-height: 20px; padding-left: 3px; color: #333; }
.s1 { width: 65px; } .s2 { width: 119px; letter-spacing: -.15px; }
.status svg { margin-left: auto; }

.taskbar { height: 40px; display: flex; align-items: center; color: #f2f2f2; font: 12px "Noto Sans", sans-serif; background: linear-gradient(90deg, #252e24 0, #282e28 540px, #302923 600px, #3b2023 740px, #352322 790px, #2a2e28 900px, #282e28 960px, #3b201b 1030px, #30261f 1070px, #292e27 1120px, #2a2d28 100%); }
.start { width: 48px; display: grid; place-items: center; }
.win-search { width: 344px; height: 40px; background: #f2f2f2; border-top: 1px solid #bbb; display: flex; align-items: center; padding: 0 14px 0 9px; gap: 9px; color: #333; font-size: 14px; letter-spacing: -.05px; }
.mic { margin-left: auto; }
.links { margin-left: 248px; width: 86px; display: flex; gap: 10px; letter-spacing: -.35px; }
.lang { width: 37px; padding-left: 6px; letter-spacing: -.3px; }
.clock { width: 75px; display: flex; flex-direction: column; align-items: center; gap: 1px; letter-spacing: -.45px; line-height: 17px; margin: -2px 0 0 -3px; }
.time { letter-spacing: -.2px; }
.action { margin-left: auto; }
```
